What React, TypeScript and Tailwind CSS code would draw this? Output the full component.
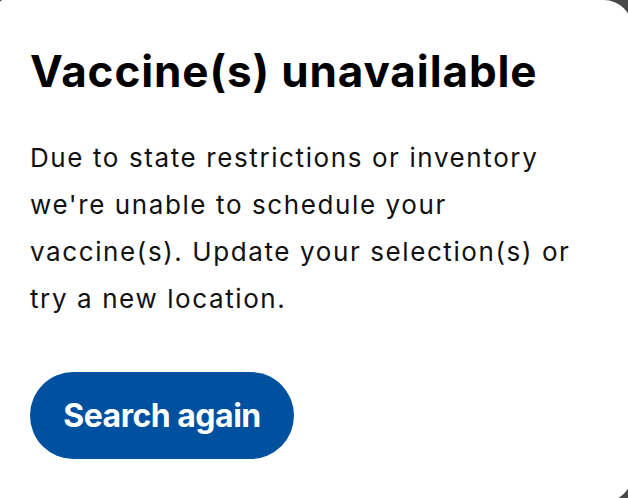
export default function App() {
  return (
    <div className="w-[628px] h-[498px] bg-[#484848] overflow-hidden">
      <div
        className="w-[632px] h-[502px] bg-white rounded-tr-[28px] rounded-br-[28px] rounded-tl-[3px] pl-[30px] pt-[45px]"
        style={{ fontFamily: "Inter, 'Liberation Sans', sans-serif" }}
      >
        <h1 className="text-[44px] font-bold leading-[52px] text-black tracking-[0.9px]">
          Vaccine(s) unavailable
        </h1>
        <p className="mt-[37px] text-[26px] leading-[47px] text-[#111] tracking-[1.6px] w-[565px]">
          Due to state restrictions or inventory we're unable to schedule your vaccine(s). Update your selection(s) or try a new location.
        </p>
        <button className="mt-[50px] h-[87px] w-[264px] rounded-full bg-[#0050a0] text-white text-[32px] font-bold tracking-[-0.5px]">
          Search again
        </button>
      </div>
    </div>
  );
}
